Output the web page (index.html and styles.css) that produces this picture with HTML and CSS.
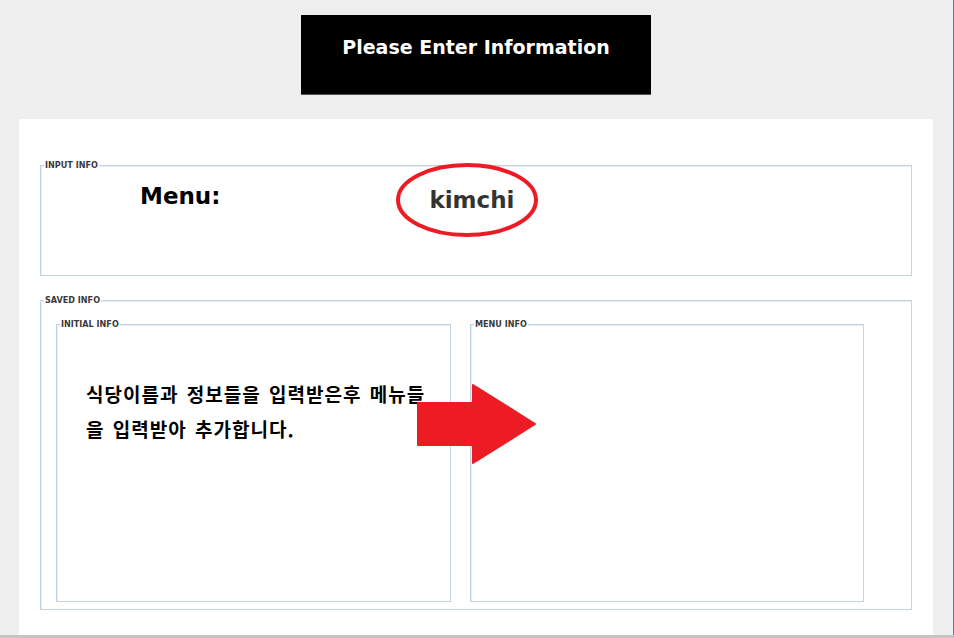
FILE: index.html
```html
<!DOCTYPE html>
<html lang="ko">
<head>
<meta charset="utf-8">
<title>Please Enter Information</title>
<link rel="stylesheet" href="styles.css">
</head>
<body>
<div class="window">
  <div class="header">
    <div class="title">Please Enter Information</div>
  </div>
  <div class="panel">
    <div class="group input-group">
      <span class="legend">INPUT INFO</span>
      <div class="input-row">
        <span class="label">Menu:</span>
        <span class="value">kimchi</span>
      </div>
    </div>
    <div class="group saved-group">
      <span class="legend">SAVED INFO</span>
      <div class="saved-row">
        <div class="group inner initial">
          <span class="legend">INITIAL INFO</span>
          <p class="desc">식당이름과 정보들을 입력받은후 메뉴들<br>을 입력받아 추가합니다.</p>
        </div>
        <div class="group inner menu">
          <span class="legend">MENU INFO</span>
        </div>
      </div>
    </div>
    <svg class="circle" width="148" height="80" viewBox="0 0 148 80">
      <ellipse cx="73" cy="40" rx="69" ry="35" fill="none" stroke="#ed1c24" stroke-width="4"/>
    </svg>
    <svg class="arrow" width="122" height="82" viewBox="0 0 122 82">
      <polygon points="2,20 57,20 57,2 119,41 57,80 57,62 2,62" fill="#ed1c24" stroke="#ed1c24" stroke-width="2" stroke-linejoin="round"/>
    </svg>
  </div>
  <div class="bottom-line"></div>
</div>
</body>
</html>
```

FILE: styles.css
```css
html, body {
  margin: 0;
  padding: 0;
  background: #eeeeee;
}

.window {
  width: 954px;
  height: 638px;
  display: flex;
  flex-direction: column;
  box-shadow: inset -1px 0 0 #4f8a8e;
  overflow: hidden;
}

.header {
  width: 350px;
  height: 79px;
  margin: 15px 0 0 301px;
  background: #000;
  border-bottom: 1px solid #555;
  display: flex;
  justify-content: center;
}

.title {
  margin-top: 20px;
  font-family: "DejaVu Sans", sans-serif;
  font-weight: bold;
  font-size: 19px;
  line-height: 24px;
  color: #fff;
}

.panel {
  position: relative;
  width: 872px;
  height: 471px;
  margin: 24px 0 0 19px;
  padding: 46px 21px 0 21px;
  background: #fff;
}

.group {
  position: relative;
  border: 1px solid #c3d3e2;
  box-shadow: inset 1px 1px 0 #e6eef6;
  box-sizing: border-box;
}

.legend {
  position: absolute;
  top: -6px;
  left: 3px;
  padding: 0 1px;
  background: #fff;
  font-family: "DejaVu Sans Condensed", "DejaVu Sans", sans-serif;
  font-stretch: condensed;
  font-weight: bold;
  font-size: 9px;
  line-height: 10px;
  color: #3a3a3a;
}

.input-group {
  width: 872px;
  height: 111px;
}

.input-row {
  display: flex;
  align-items: flex-start;
  padding: 16px 0 0 99px;
}

.label,
.value {
  font-family: "DejaVu Sans", sans-serif;
  font-weight: bold;
  font-size: 23px;
  line-height: 28px;
}

.label {
  color: #000;
}

.value {
  color: #333;
  margin: 4px 0 0 209px;
}

.saved-group {
  width: 872px;
  height: 310px;
  margin-top: 24px;
}

.saved-row {
  display: flex;
  gap: 19px;
  padding: 23px 0 0 15px;
}

.inner {
  height: 278px;
}

.initial {
  width: 395px;
}

.menu {
  width: 394px;
}

.desc {
  margin: 0;
  padding: 51px 0 0 29px;
  font-family: "Noto Sans CJK KR", "Noto Sans", sans-serif;
  font-weight: bold;
  font-size: 19px;
  line-height: 35px;
  letter-spacing: 1px;
  word-spacing: 2px;
  white-space: nowrap;
  color: #000;
}

.circle {
  position: absolute;
  left: 375px;
  top: 41px;
}

.arrow {
  position: absolute;
  left: 397px;
  top: 264px;
}

.bottom-line {
  height: 3px;
  margin-top: 0;
  background: #c4c4c4;
}
```
